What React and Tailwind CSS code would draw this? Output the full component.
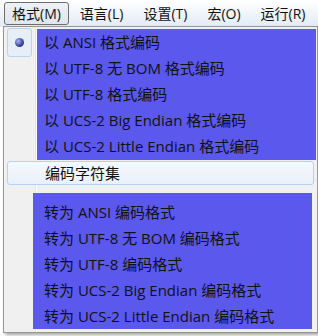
import React from "react";

const menus = ["格式(M)", "语言(L)", "设置(T)", "宏(O)", "运行(R)"];

const encodeAs = [
  "以 ANSI 格式编码",
  "以 UTF-8 无 BOM 格式编码",
  "以 UTF-8 格式编码",
  "以 UCS-2 Big Endian 格式编码",
  "以 UCS-2 Little Endian 格式编码",
];

const convertTo = [
  "转为 ANSI 编码格式",
  "转为 UTF-8 无 BOM 编码格式",
  "转为 UTF-8 编码格式",
  "转为 UCS-2 Big Endian 编码格式",
  "转为 UCS-2 Little Endian 编码格式",
];

const App = () => {
  return (
    <div className="relative w-[318px] h-[336px] overflow-hidden bg-white text-[#111] font-['Open_Sans','Noto_Sans_CJK_SC',sans-serif]">
      {/* menu bar */}
      <div className="h-[27px] flex items-center pl-[4px] gap-[2px] text-[14px] bg-gradient-to-b from-[#ffffff] to-[#e3ebf6] border-b border-[#dae3ef] whitespace-nowrap">
        {menus.map((m, i) => (
          <div
            key={i}
            className={
              i === 0
                ? "h-[23px] px-[7px] flex items-center rounded-[3px] border border-[#6e6e6e] bg-gradient-to-b from-[#eef1f5] to-[#dfe5ee]"
                : "h-[23px] px-[9px] flex items-center"
            }
          >
            {m}
          </div>
        ))}
      </div>

      {/* dropdown */}
      <div className="absolute left-[3px] top-[26px] w-[315px] h-[307px] bg-[#f0f0f0] border border-[#979797] shadow-[2px_2px_3px_rgba(0,0,0,0.35)] text-[15px]">
        <div className="absolute left-[31px] top-[1px] bottom-[1px] w-[2px] border-l border-[#e2e3e3] border-r border-r-white" />

        <div className="relative flex flex-col">
          <div className="absolute left-[3px] top-[1px] w-[25px] h-[29px] rounded-[3px] border border-[#b7d4ee] bg-[#e6eef8] flex items-center justify-center">
            <div className="w-[9px] h-[9px] rounded-full bg-[radial-gradient(circle_at_35%_35%,#a9b3f0,#2a2f8c_70%)]" />
          </div>

          <div className="ml-[33px] mt-[2px] mr-[1px] h-[131px] bg-[#5b58ee] flex flex-col">
            {encodeAs.map((t, i) => (
              <div key={i} className="h-[26px] flex items-center pl-[7px] whitespace-nowrap">
                {t}
              </div>
            ))}
          </div>

          <div className="mx-[3px] mt-[1px] h-[24px] rounded-[3px] border border-[#aed3f3] bg-gradient-to-b from-[#f6f9fd] to-[#e8f0fa] flex items-center pl-[37px]">
            编码字符集
          </div>

          <div className="ml-[29px] mt-[8px] mr-[5px] h-[136px] bg-[#5b58ee] flex flex-col pt-[6px]">
            {convertTo.map((t, i) => (
              <div key={i} className="h-[26px] flex items-center pl-[11px] whitespace-nowrap">
                {t}
              </div>
            ))}
          </div>
        </div>
      </div>
    </div>
  );
};

export default App;
